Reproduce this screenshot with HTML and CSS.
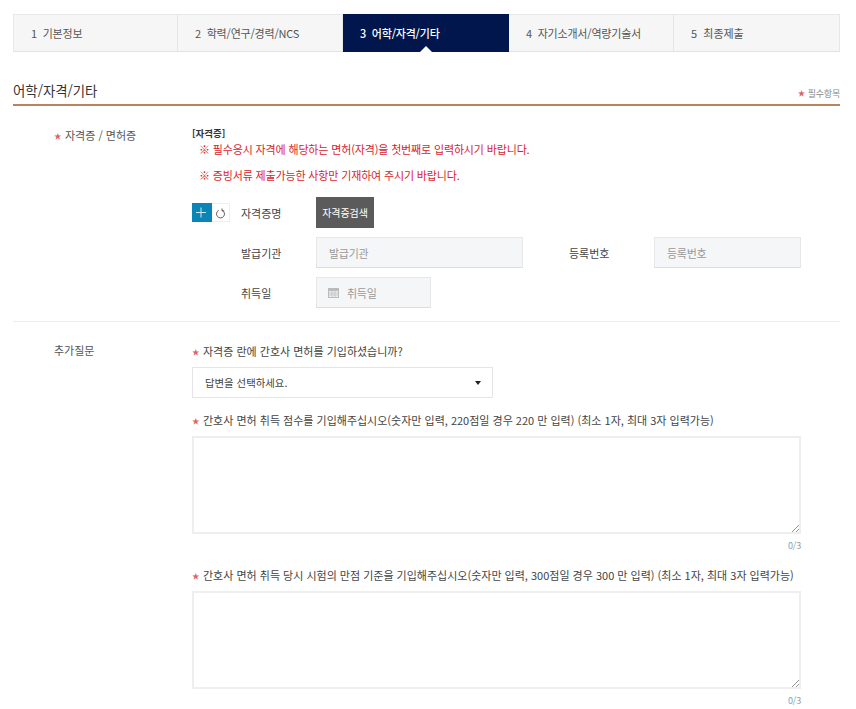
FILE: index.html
```html
<!DOCTYPE html>
<html lang="ko">
<head>
<meta charset="utf-8">
<title>어학/자격/기타</title>
<link rel="stylesheet" href="styles.css">
</head>
<body>
<div class="page">
  <ol class="tabs">
    <li class="tab t1">1&nbsp; 기본정보</li>
    <li class="tab t2">2&nbsp; 학력/연구/경력/NCS</li>
    <li class="tab t3 active">3&nbsp; 어학/자격/기타</li>
    <li class="tab t4">4&nbsp; 자기소개서/역량기술서</li>
    <li class="tab t5">5&nbsp; 최종제출</li>
  </ol>
  <header class="head">
    <h2>어학/자격/기타</h2>
    <span class="req-note"><i class="star">★</i>필수항목</span>
  </header>
  <section class="row first">
    <div class="side"><i class="star">★</i>자격증 / 면허증</div>
    <div class="main">
      <div class="sub">[자격증]</div>
      <p class="warn w1">※ 필수응시 자격에 해당하는 면허(자격)을 첫번째로 입력하시기 바랍니다.</p>
      <p class="warn w2">※ 증빙서류 제출가능한 사항만 기재하여 주시기 바랍니다.</p>
      <div class="line l1">
        <div class="tools">
          <button class="add" aria-label="추가"><svg width="19" height="19" viewBox="0 0 19 19"><path d="M9 4.5v10M4 9.5h10" stroke="#cfe8f3" stroke-width="1" fill="none"/></svg></button>
          <button class="reset" aria-label="초기화"><svg width="18" height="18" viewBox="0 0 18 18"><path d="M7.2 6.2a4.2 4.2 0 1 0 3.6 0" stroke="#555" stroke-width="1" fill="none"/><path d="M10.6 4.2v2.5h2.3" stroke="#555" stroke-width="1" fill="none"/></svg></button>
        </div>
        <label class="lab">자격증명</label>
        <button class="search">자격증검색</button>
      </div>
      <div class="line l2">
        <label class="lab ind">발급기관</label>
        <div class="inp w-org">발급기관</div>
        <label class="lab reg">등록번호</label>
        <div class="inp w-reg">등록번호</div>
      </div>
      <div class="line l3">
        <label class="lab ind">취득일</label>
        <div class="inp w-date"><svg class="cal" width="11" height="10" viewBox="0 0 11 10"><path d="M0 0h11v10H0z" fill="#bbb"/><path d="M1 3h9v6H1z" fill="#eee"/><path d="M1 5h9M1 7h9M4 3v6M7 3v6" stroke="#bbb" stroke-width=".7"/></svg>취득일</div>
      </div>
    </div>
  </section>
  <section class="row second">
    <div class="side plain">추가질문</div>
    <div class="main">
      <div class="q q1"><i class="star">★</i>자격증 란에 간호사 면허를 기입하셨습니까?</div>
      <div class="select"><span>답변을 선택하세요.</span><b class="caret"></b></div>
      <div class="q q2"><i class="star">★</i>간호사 면허 취득 점수를 기입해주십시오(숫자만 입력, 220점일 경우 220 만 입력) (최소 1자, 최대 3자 입력가능)</div>
      <div class="ta"><svg class="grip" width="8" height="8" viewBox="0 0 8 8"><path d="M1 8l7-7M5 8l3-3" stroke="#777" stroke-width=".8"/></svg></div>
      <div class="count"><span>0</span>/3</div>
      <div class="q q3"><i class="star">★</i>간호사 면허 취득 당시 시험의 만점 기준을 기입해주십시오(숫자만 입력, 300점일 경우 300 만 입력) (최소 1자, 최대 3자 입력가능)</div>
      <div class="ta"><svg class="grip" width="8" height="8" viewBox="0 0 8 8"><path d="M1 8l7-7M5 8l3-3" stroke="#777" stroke-width=".8"/></svg></div>
      <div class="count"><span>0</span>/3</div>
    </div>
  </section>
</div>
</body>
</html>
```
FILE: styles.css
```css
* { box-sizing: border-box; }
html, body { margin: 0; padding: 0; height: 709px; overflow: hidden; background: #fff; }
body { font-family: "Noto Sans CJK KR", "Noto Sans", sans-serif; font-size: 11px; color: #444; }
.page { width: 827px; margin-left: 13px; padding-top: 14px; }
.star { display: inline-block; width: 11px; font-style: normal; font-size: 7.5px; color: #dc6468; position: relative; top: -1px; }
.tabs { list-style: none; margin: 0; padding: 0; display: flex; height: 38px; border: 1px solid #e8e8e8; border-bottom-color: #e2e2e2; background: #f6f6f6; }
.tab { display: flex; align-items: center; padding-left: 17px; color: #555; font-size: 11px; letter-spacing: -.2px; border-right: 1px solid #e6e6e6; }
.t1 { width: 164px; }
.t2 { width: 165px; }
.t3 { width: 166px; }
.t4 { width: 165px; }
.t5 { flex: 1; border-right: 0; letter-spacing: 0; }
.active { position: relative; margin: -1px 0; height: 38px; background: #00164d; color: #fff; border: 0; font-weight: 500; }
.active::after { content: ""; position: absolute; left: 77px; bottom: 0; border: 6px solid transparent; border-top: 0; border-bottom-color: #fff; }
.head { display: flex; justify-content: space-between; align-items: flex-end; height: 54px; padding-bottom: 4px; border-bottom: 2px solid #bb825f; }
.head h2 { margin: 0; font-size: 13.4px; font-weight: 400; color: #333; line-height: 20px; }
.req-note { font-size: 9px; color: #888; line-height: 14px; letter-spacing: -.2px; position: relative; top: 1px; }
.req-note .star { width: 10px; }
.row { display: grid; grid-template-columns: 179px 1fr; }
.first { height: 216px; border-bottom: 1px solid #eee; padding-top: 20px; }
.second { padding-top: 19px; }
.side { padding-left: 41px; line-height: 18px; color: #555; }
.main { min-width: 0; }
.sub { font-size: 9.5px; font-weight: 700; color: #333; line-height: 14px; }
.warn { margin: 0; color: #d8232f; font-size: 11px; letter-spacing: -.15px; line-height: 18px; padding-left: 7px; }
.w2 { margin-top: 8px; }
.line { display: flex; align-items: center; }
.l1 { height: 31px; margin-top: 13px; }
.l2 { height: 31px; margin-top: 9px; }
.l3 { height: 31px; margin-top: 9px; }
button { font: inherit; padding: 0; border: 0; cursor: pointer; }
.tools { display: flex; width: 49px; height: 19px; }
.add { width: 20px; height: 19px; background: #0a85b8; display: flex; }
.reset { width: 18px; height: 19px; background: #fff; border: 1px solid #eee; border-left: 0; display: flex; }
.lab { color: #444; line-height: 18px; }
.ind { margin-left: 49px; }
.l1 .lab, .ind { width: 75px; }
.search { width: 58px; height: 31px; background: #5b5b5b; color: #fff; font-size: 10px; letter-spacing: -.1px; }
.inp { height: 31px; background: #f5f6f7; border: 1px solid #e7e7e7; border-bottom: 1px solid #dcdcdc; color: #999; padding-left: 12px; display: flex; align-items: center; letter-spacing: -.3px; }
.w-org { width: 207px; }
.reg { margin-left: 46px; width: 85px; }
.w-reg { width: 147px; }
.w-date { width: 115px; }
.cal { margin-right: 8px; margin-left: -1px; }
.q { line-height: 18px; color: #444; white-space: nowrap; }
.q1 { margin-top: 1px; }
.q2 { margin-top: 13px; }
.q3 { margin-top: 13px; }
.select { display: flex; justify-content: space-between; align-items: center; width: 301px; height: 31px; margin-top: 5px; padding: 0 11px 0 12px; border: 1px solid #e5e5e5; color: #444; font-size: 10.4px; }
.caret { border: 3.5px solid transparent; border-top: 4px solid #222; border-bottom: 0; }
.ta { position: relative; width: 609px; height: 98px; margin-top: 5px; border: 2px solid #eee; background: #fff; }
.grip { position: absolute; right: 0; bottom: 0; }
.count { width: 609px; text-align: right; font-size: 9px; letter-spacing: -.2px; line-height: 14px; color: #999; margin-top: 5px; }
.count span { color: #6fa7c7; }
```
